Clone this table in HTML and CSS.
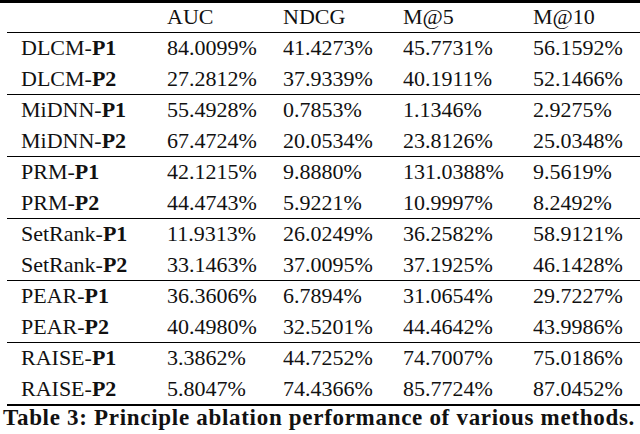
FILE: index.html
```html
<!DOCTYPE html>
<html>
<head>
<meta charset="utf-8">
<link rel="stylesheet" href="styles.css">
</head>
<body>
<div class="page">
  <table class="tbl">
    <colgroup>
      <col class="c-name"><col class="c-auc"><col class="c-ndcg"><col class="c-m5"><col class="c-m10">
    </colgroup>
    <thead>
      <tr><th></th><th>AUC</th><th>NDCG</th><th>M@5</th><th>M@10</th></tr>
    </thead>
    <tbody class="grp">
      <tr class="r1"><td>DLCM-<b>P1</b></td><td>84.0099%</td><td>41.4273%</td><td>45.7731%</td><td>56.1592%</td></tr>
      <tr class="r2"><td>DLCM-<b>P2</b></td><td>27.2812%</td><td>37.9339%</td><td>40.1911%</td><td>52.1466%</td></tr>
    </tbody>
    <tbody class="grp">
      <tr class="r1"><td>MiDNN-<b>P1</b></td><td>55.4928%</td><td>0.7853%</td><td>1.1346%</td><td>2.9275%</td></tr>
      <tr class="r2"><td>MiDNN-<b>P2</b></td><td>67.4724%</td><td>20.0534%</td><td>23.8126%</td><td>25.0348%</td></tr>
    </tbody>
    <tbody class="grp">
      <tr class="r1"><td>PRM-<b>P1</b></td><td>42.1215%</td><td>9.8880%</td><td>131.0388%</td><td>9.5619%</td></tr>
      <tr class="r2"><td>PRM-<b>P2</b></td><td>44.4743%</td><td>5.9221%</td><td>10.9997%</td><td>8.2492%</td></tr>
    </tbody>
    <tbody class="grp">
      <tr class="r1"><td>SetRank-<b>P1</b></td><td>11.9313%</td><td>26.0249%</td><td>36.2582%</td><td>58.9121%</td></tr>
      <tr class="r2"><td>SetRank-<b>P2</b></td><td>33.1463%</td><td>37.0095%</td><td>37.1925%</td><td>46.1428%</td></tr>
    </tbody>
    <tbody class="grp">
      <tr class="r1"><td>PEAR-<b>P1</b></td><td>36.3606%</td><td>6.7894%</td><td>31.0654%</td><td>29.7227%</td></tr>
      <tr class="r2"><td>PEAR-<b>P2</b></td><td>40.4980%</td><td>32.5201%</td><td>44.4642%</td><td>43.9986%</td></tr>
    </tbody>
    <tbody class="grp last">
      <tr class="r1"><td>RAISE-<b>P1</b></td><td>3.3862%</td><td>44.7252%</td><td>74.7007%</td><td>75.0186%</td></tr>
      <tr class="r2"><td>RAISE-<b>P2</b></td><td>5.8047%</td><td>74.4366%</td><td>85.7724%</td><td>87.0452%</td></tr>
    </tbody>
  </table>
  <p class="caption">Table 3: Principle ablation performance of various methods.</p>
</div>
</body>
</html>
```

FILE: styles.css
```css
html, body {
  margin: 0;
  padding: 0;
  background: #ffffff;
}

body {
  font-family: "Liberation Serif", "DejaVu Serif", serif;
  color: #111111;
}

.page {
  width: 640px;
  border-top: 3px solid #000000;
}

.tbl {
  margin-left: 7px;
  width: 633px;
  border-collapse: separate;
  border-spacing: 0;
  table-layout: fixed;
  font-size: 22px;
}

.c-name { width: 146px; }
.c-auc { width: 116px; }
.c-ndcg { width: 120px; }
.c-m5 { width: 130px; }
.c-m10 { width: 121px; }

.tbl th,
.tbl td {
  text-align: left;
  font-weight: normal;
  padding: 0 0 0 14px;
  white-space: nowrap;
  vertical-align: middle;
}

.tbl thead th {
  line-height: 28px;
  padding-bottom: 1px;
  border-bottom: 1px solid #000000;
}

.tbl b {
  font-weight: bold;
}

.grp .r1 td {
  line-height: 30px;
  padding-bottom: 1px;
}

.grp .r2 td {
  line-height: 29px;
  padding-bottom: 1px;
  border-bottom: 1px solid #000000;
}

.grp.last .r2 td {
  border-bottom: 2px solid #000000;
}

.caption {
  margin: 0;
  padding-left: 3px;
  font-size: 23px;
  line-height: 24px;
  font-weight: bold;
  letter-spacing: 0.7px;
  white-space: nowrap;
  color: #111111;
}
```
